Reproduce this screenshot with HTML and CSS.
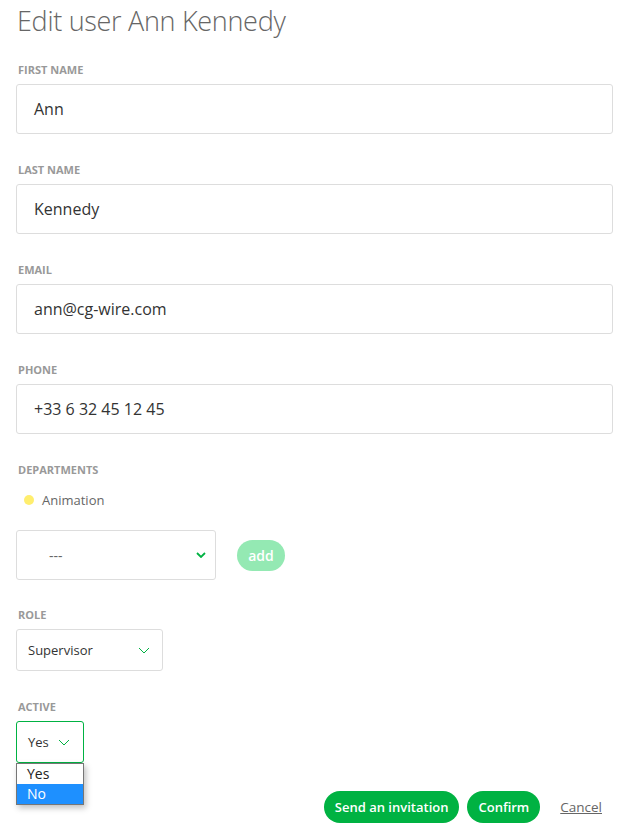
FILE: index.html
```html
<!DOCTYPE html>
<html>
<head>
<meta charset="utf-8">
<link rel="stylesheet" href="styles.css">
</head>
<body>
<div class="page">
  <h1 class="title">Edit user Ann Kennedy</h1>

  <div class="field">
    <label class="label">First name</label>
    <div class="input">Ann</div>
  </div>
  <div class="field">
    <label class="label">Last name</label>
    <div class="input">Kennedy</div>
  </div>
  <div class="field">
    <label class="label">Email</label>
    <div class="input">ann@cg-wire.com</div>
  </div>
  <div class="field">
    <label class="label">Phone</label>
    <div class="input">+33 6 32 45 12 45</div>
  </div>

  <div class="field field-dept">
    <label class="label">Departments</label>
    <div class="dept"><span class="dot"></span><span class="dept-name">Animation</span></div>
    <div class="dept-add">
      <div class="select select-dept">
        <span class="select-text">---</span>
        <svg class="chev chev-bold" width="10" height="6" viewBox="0 0 10 6"><path d="M1 1 L5 5 L9 1" fill="none" stroke="#00b242" stroke-width="1.8"/></svg>
      </div>
      <button class="btn-add">add</button>
    </div>
  </div>

  <div class="field">
    <label class="label">Role</label>
    <div class="select select-role">
      <span class="select-text">Supervisor</span>
      <svg class="chev" width="12" height="7" viewBox="0 0 12 7"><path d="M1 1 L6 6 L11 1" fill="none" stroke="#00b242" stroke-width="1"/></svg>
    </div>
  </div>

  <div class="field field-active">
    <label class="label">Active</label>
    <div class="active-wrap">
      <div class="select select-active">
        <span class="select-text">Yes</span>
        <svg class="chev" width="12" height="7" viewBox="0 0 12 7"><path d="M1 1 L6 6 L11 1" fill="none" stroke="#00b242" stroke-width="1"/></svg>
      </div>
      <ul class="options">
        <li class="option">Yes</li>
        <li class="option option-selected">No</li>
      </ul>
    </div>
  </div>

  <div class="actions">
    <button class="btn">Send an invitation</button>
    <button class="btn">Confirm</button>
    <a class="cancel">Cancel</a>
  </div>
</div>
</body>
</html>
```

FILE: styles.css
```css
* { box-sizing: border-box; }
html, body { margin: 0; padding: 0; background: #fff; }
body {
  font-family: "Open Sans", "Noto Sans", sans-serif;
  color: #333;
}
.page {
  width: 629px;
  padding: 0 16px 0 16px;
}
.title {
  margin: 0;
  padding-top: 1px;
  padding-left: 1px;
  font-size: 27px;
  font-weight: 300;
  line-height: 40px;
  color: #666;
  letter-spacing: -0.3px;
  margin-bottom: 22px;
}
.field { margin-bottom: 29px; }
.field-dept { margin-bottom: 28px; }
.label {
  display: block;
  font-size: 11px;
  font-weight: 700;
  line-height: 14px;
  text-transform: uppercase;
  color: #999;
  margin-bottom: 7px;
  padding-left: 2px;
}
.input {
  width: 597px;
  height: 50px;
  border: 1px solid #dddddd;
  border-radius: 3px;
  padding: 0 0 0 17px;
  font-size: 16px;
  line-height: 48px;
  color: #333;
}
.dept {
  display: flex;
  align-items: center;
  height: 24px;
  padding-left: 8px;
  margin-top: 11px;
  margin-bottom: 18px;
}
.dot {
  width: 10px;
  height: 10px;
  border-radius: 50%;
  background: #ffee6e;
  margin-right: 8px;
}
.dept-name {
  font-size: 13px;
  color: #666;
}
.dept-add {
  display: flex;
  align-items: center;
}
.select {
  display: flex;
  align-items: center;
  justify-content: space-between;
  border: 1px solid #dddddd;
  border-radius: 3px;
  background: #fff;
  font-size: 14px;
  color: #333;
}
.select-dept {
  width: 200px;
  height: 50px;
  padding: 0 9px 0 32px;
  color: #666;
}
.select-role {
  width: 147px;
  height: 42px;
  padding: 0 12px 0 11px;
  font-size: 13px;
}
.select-active {
  width: 68px;
  height: 42px;
  padding: 0 13px 0 11px;
  border-color: #00b242;
  font-size: 13px;
}
.chev { display: block; }
.btn-add {
  margin-left: 21px;
  width: 48px;
  height: 31px;
  border: none;
  border-radius: 16px;
  background: #94e9b3;
  color: #fff;
  font-family: "Open Sans", sans-serif;
  font-size: 14px;
  font-weight: 600;
  padding: 0;
}
.field-active { margin-bottom: 28px; }
.active-wrap { position: relative; width: 68px; }
.options {
  position: absolute;
  left: 0;
  top: 42px;
  width: 68px;
  margin: 0;
  padding: 0;
  list-style: none;
  border: 1px solid #767676;
  background: #fff;
  box-shadow: 2px 3px 6px rgba(0,0,0,0.25);
}
.option {
  height: 20px;
  line-height: 20px;
  padding-left: 10px;
  font-size: 14px;
  color: #222;
}
.option-selected {
  background: #1e90ff;
  color: #fff;
}
.actions {
  display: flex;
  justify-content: flex-end;
  align-items: center;
  padding-right: 11px;
}
.btn {
  height: 32px;
  border: none;
  border-radius: 16px;
  background: #00b242;
  color: #fff;
  font-family: "Open Sans", sans-serif;
  font-size: 13px;
  font-weight: 600;
  padding: 0 11px;
  margin-right: 8px;
}
.cancel {
  margin-left: 12px;
  font-size: 13.5px;
  color: #666;
  text-decoration: underline;
  cursor: pointer;
}
```
